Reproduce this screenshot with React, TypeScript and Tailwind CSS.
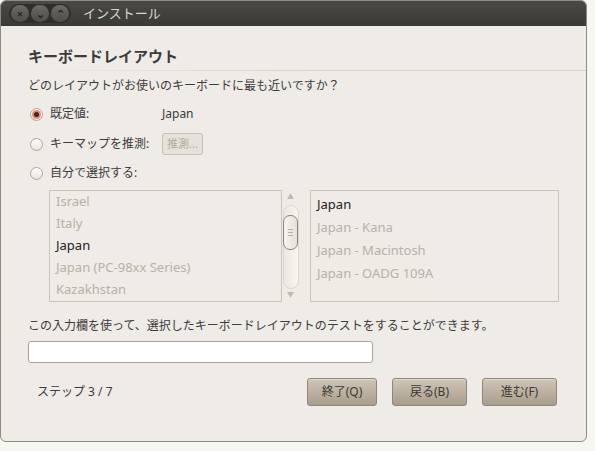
import React from "react";

const font = { fontFamily: '"Noto Sans", "Noto Sans CJK JP", sans-serif' };

function Radio({ checked }: { checked?: boolean }) {
  return (
    <span className="w-[13px] h-[13px] rounded-full border border-[#b0a898] bg-gradient-to-b from-white to-[#e8e4dc] flex items-center justify-center shrink-0">
      {checked && <span className="w-[5px] h-[5px] rounded-full bg-[#3a2a20] shadow-[0_0_0_2px_#f08a70]" />}
    </span>
  );
}

const left = ["Israel", "Italy", "Japan", "Japan (PC-98xx Series)", "Kazakhstan"];
const right = ["Japan", "Japan - Kana", "Japan - Macintosh", "Japan - OADG 109A"];

export default function App() {
  return (
    <div className="w-[595px] h-[451px] bg-[#f6f7f0] text-[12px]" style={font}>
      <div className="w-[587px] h-[442px] rounded-[6px] bg-[#efebe6] border border-[#8e8a82] overflow-hidden flex flex-col">
        <div className="h-[25px] bg-gradient-to-b from-[#4a4945] to-[#3a3935] flex items-center pl-[8px] shrink-0">
          <div className="flex items-center rounded-full bg-[#2f2e2b] px-[2px] py-[1px] gap-[2px]">
            {["×", "⌄", "⌃"].map((c) => (
              <span key={c} className="w-[18px] h-[17px] rounded-full bg-gradient-to-b from-[#6b6a65] to-[#4e4d49] text-[#2a2926] text-[11px] leading-[17px] text-center font-bold">{c}</span>
            ))}
          </div>
          <span className="ml-[12px] text-[#d8d6d0] text-[13px]">インストール</span>
        </div>
        <div className="px-[27px] pt-[20px] flex flex-col">
          <div className="font-bold text-[15px] text-[#3c3c3c] leading-[20px]">キーボードレイアウト</div>
          <div className="h-px mt-[4px] bg-gradient-to-r from-[#efebe6] via-[#d8d2c8] to-[#d8d2c8] mr-[-27px]" />
          <div className="mt-[6px] text-[#3c3c3c]">どのレイアウトがお使いのキーボードに最も近いですか？</div>
          <div className="mt-[9px] flex items-center gap-[7px] pl-[2px] h-[20px]">
            <Radio checked />
            <span className="w-[105px] text-[#3c3c3c]">既定値:</span>
            <span className="text-[#3c3c3c]">Japan</span>
          </div>
          <div className="mt-[9px] flex items-center gap-[7px] pl-[2px] h-[22px]">
            <Radio />
            <span className="w-[105px] text-[#3c3c3c]">キーマップを推測:</span>
            <span className="h-[22px] px-[4px] border border-[#c8c0b4] rounded-[3px] bg-[#e6e1d9] text-[#b0a9a0] leading-[20px] text-[11px]">推測...</span>
          </div>
          <div className="mt-[8px] flex items-center gap-[7px] pl-[2px] h-[20px]">
            <Radio />
            <span className="text-[#3c3c3c]">自分で選択する:</span>
          </div>
          <div className="mt-[7px] ml-[21px] flex h-[112px]">
            <div className="w-[234px] border border-[#cac4b9] flex flex-col pl-[6px] pt-[0px]">
              {left.map((t) => (
                <div key={t} className={"h-[23px] leading-[20px] text-[13px] " + (t === "Japan" ? "text-[#222]" : "text-[#b8b2a8]")}>{t}</div>
              ))}
            </div>
            <div className="w-[17px] flex flex-col items-center pt-[2px]">
              <span className="text-[7px] text-[#c0b9ae]">▲</span>
              <div className="mt-[2px] w-[16px] h-[84px] rounded-full bg-gradient-to-r from-[#ebe7e0] to-[#f8f6f2] border border-[#ddd7cc] flex flex-col items-center pt-[9px]">
                <div className="w-[15px] h-[35px] rounded-[7px] border border-[#8a8478] bg-gradient-to-r from-[#f6f4f0] to-[#e6e1d8] flex flex-col items-center justify-center gap-[2px]">
                  <span className="w-[5px] h-px bg-[#b8b2a6]" />
                  <span className="w-[5px] h-px bg-[#b8b2a6]" />
                  <span className="w-[5px] h-px bg-[#b8b2a6]" />
                </div>
              </div>
              <span className="text-[7px] text-[#c0b9ae] mt-auto mb-[2px]">▼</span>
            </div>
            <div className="ml-[11px] w-[250px] border border-[#cac4b9] flex flex-col pl-[6px] pt-[3px]">
              {right.map((t) => (
                <div key={t} className={"h-[23px] leading-[20px] text-[13px] " + (t === "Japan" ? "text-[#222]" : "text-[#b8b2a8]")}>{t}</div>
              ))}
            </div>
          </div>
          <div className="mt-[15px] text-[#3c3c3c]">この入力欄を使って、選択したキーボードレイアウトのテストをすることができます。</div>
          <div className="mt-[6px] w-[345px] h-[22px] bg-white border border-[#a8a197] rounded-[3px]" />
          <div className="mt-[15px] flex items-center h-[28px]">
            <span className="ml-[9px] text-[#3c3c3c] whitespace-pre">ステップ 3 / 7</span>
            <div className="ml-auto mr-[2px] flex gap-[15px]">
              {[["終了(Q)", 70], ["戻る(B)", 75], ["進む(F)", 75]].map(([t, w]) => (
                <span key={t as string} style={{ width: w as number }} className="h-[28px] rounded-[3px] border border-[#918778] bg-gradient-to-b from-[#cfc6b8] to-[#a99d8a] text-[#3c3a36] flex items-center justify-center shadow-[inset_0_1px_0_#ddd6ca]">{t}</span>
              ))}
            </div>
          </div>
        </div>
      </div>
    </div>
  );
}
